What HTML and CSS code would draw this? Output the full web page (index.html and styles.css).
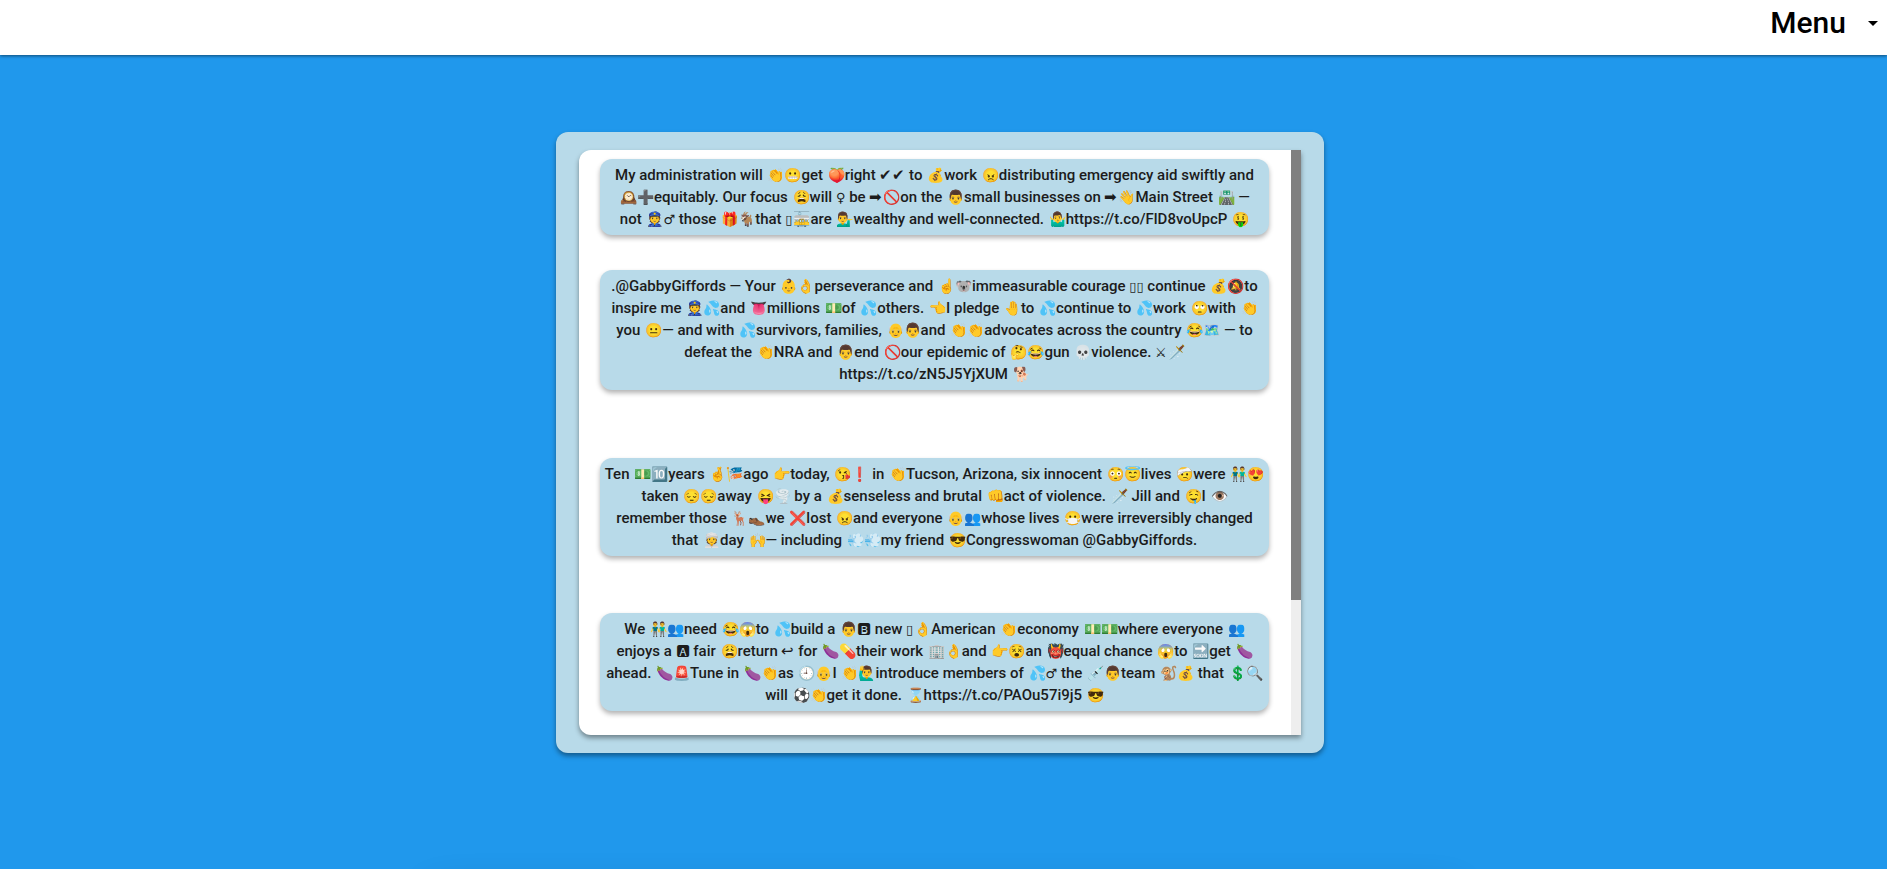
FILE: index.html
```html
<!DOCTYPE html>
<html lang="en">
<head>
<meta charset="utf-8">
<title>Tweets</title>
<link rel="stylesheet" href="styles.css">
</head>
<body>
<header class="topbar">
  <button class="menu" type="button">Menu
    <svg class="caret" viewBox="0 0 10 5" aria-hidden="true"><path d="M0 0h10L5 5z"/></svg>
  </button>
</header>
<main class="stage">
  <section class="panel">
    <div class="viewport">
      <div class="feed">
        <article class="tweet">My administration will <i>👏😬</i>get <i>🍑</i>right ✔✔ to <i>💰</i>work <i>😠</i>distributing emergency aid swiftly and<br><i>🕰️➕</i>equitably. Our focus <i>😩</i>will <b>♀</b> be ➡<i>🚫</i>on the <i>👨</i>small businesses on ➡<i>👋</i>Main Street <i>🛣️</i> —<br>not <i>👮</i><b>♂</b> those <i>🎁🐐</i>that <b>▯</b><i>🚋</i>are <i>💁‍♂️</i>wealthy and well-connected. <i>🤷‍♂️</i>https://t.co/FlD8voUpcP <i>🤑</i></article>
        <article class="tweet">.@GabbyGiffords — Your <i>👶👌</i>perseverance and <i>☝️🐨</i>immeasurable courage <b>▯▯</b> continue <i>💰🔕</i>to<br>inspire me <i>👮💦</i>and <i>👅</i>millions <i>💵</i>of <i>💦</i>others. <i>👈</i>I pledge <i>🤚</i>to <i>💦</i>continue to <i>💦</i>work <i>🙄</i>with <i>👏</i><br>you <i>😐</i>— and with <i>💦</i>survivors, families, <i>👴👨</i>and <i>👏👏</i>advocates across the country <i>😂🗺️</i> — to<br>defeat the <i>👏</i>NRA and <i>👨</i>end <i>🚫</i>our epidemic of <i>🤔😂</i>gun <i>💀</i>violence. <b>⚔</b><i>🗡️</i><br>https://t.co/zN5J5YjXUM <i>🐕</i></article>
        <article class="tweet tweet-far">Ten <i>💵🔟</i>years <i>🤞🎏</i>ago <i>👉</i>today, <i>😘❗</i> in <i>👏</i>Tucson, Arizona, six innocent <i>😳😇</i>lives <i>🤕</i>were <i>👬😍</i><br>taken <i>😔😔</i>away <i>😝🌪️</i> by a <i>💰</i>senseless and brutal <i>👊</i>act of violence. <i>🗡️</i> Jill and <i>🤤</i>I <i>👁️</i><br>remember those <i>🦌👞</i>we <i>❌</i>lost <i>😠</i>and everyone <i>👴👥</i>whose lives <i>😷</i>were irreversibly changed<br>that <i>👳</i>day <i>🙌</i>— including <i>💨💨</i>my friend <i>😎</i>Congresswoman @GabbyGiffords.</article>
        <article class="tweet tweet-mid">We <i>👬👥</i>need <i>😂😱</i>to <i>💦</i>build a <i>👨</i>🅱 new <b>▯</b><i>👌</i>American <i>👏</i>economy <i>💵💵</i>where everyone <i>👥</i><br>enjoys a 🅰 fair <i>😩</i>return ↩ for <i>🍆💊</i>their work <i>🏢👌</i>and <i>👉😵</i>an <i>👹</i>equal chance <i>😱</i>to <i>🔜</i>get <i>🍆</i><br>ahead. <i>🍆🚨</i>Tune in <i>🍆👏</i>as <i>🕘👴</i>I <i>👏🙋‍♂️</i>introduce members of <i>💦</i><b>♂</b> the <i>💉👨</i>team <i>🐒💰</i> that <i>💲🔍</i><br>will <i>⚽👏</i>get it done. <i>⌛</i>https://t.co/PAOu57i9j5 <i>😎</i></article>
      </div>
      <div class="track"><div class="thumb"></div></div>
    </div>
  </section>
</main>
<div class="dock"></div>
</body>
</html>
```
FILE: styles.css
```css
* { box-sizing: border-box; }
body { margin: 0; height: 100vh; overflow: hidden; display: flex; flex-direction: column; background: #2098ec; font-family: Roboto, sans-serif; color: #1c1c1c; }
.topbar { flex: none; display: flex; justify-content: flex-end; height: 55px; padding: 4px 9px 0; background: #fff; box-shadow: 0 1px 3px rgba(0,0,0,.5); }
.menu { display: flex; align-items: center; gap: 22px; height: 38px; padding: 0; border: 0; background: none; font: 500 30px/38px Roboto, sans-serif; color: #000; }
.caret { width: 10px; height: 5px; }
.stage { flex: 1 0 auto; padding: 77px 7px 0 0; display: flex; justify-content: center; align-items: flex-start; }
.panel { width: 100%; max-width: 768px; padding: 18px 23px; border-radius: 12px; background: #b8dae9; box-shadow: 0 3px 5px rgba(0,0,0,.4); }
.viewport { display: flex; border-radius: 12px 0 0 12px; background: #fff; box-shadow: 0 3px 5px rgba(0,0,0,.4); }
.feed { flex: 1; min-width: 0; padding: 9px 22px 24px 21px; }
.track { width: 10px; background: #eee; }
.thumb { height: 77%; background: #808080; }
.tweet { padding: 5px 0; border-radius: 12px; background: #b8dae9; box-shadow: 0 3px 5px rgba(0,0,0,.3); font-size: 15px; line-height: 22px; font-weight: 500; text-align: center; }
.tweet + .tweet { margin-top: 35px; }
.tweet + .tweet-far { margin-top: 68px; }
.tweet + .tweet-mid { margin-top: 57px; }
.tweet i { padding-left: 1px; font-size: 14px; line-height: 1; font-style: normal; }
.tweet b { font-family: "DejaVu Sans", sans-serif; font-size: 13px; line-height: 1; font-weight: 400; }
.dock { flex: none; height: 1px; width: 1000px; margin: 0 auto -30px; box-shadow: 0 8px 40px 10px rgba(0,0,0,.3); align-self: center; }
```
